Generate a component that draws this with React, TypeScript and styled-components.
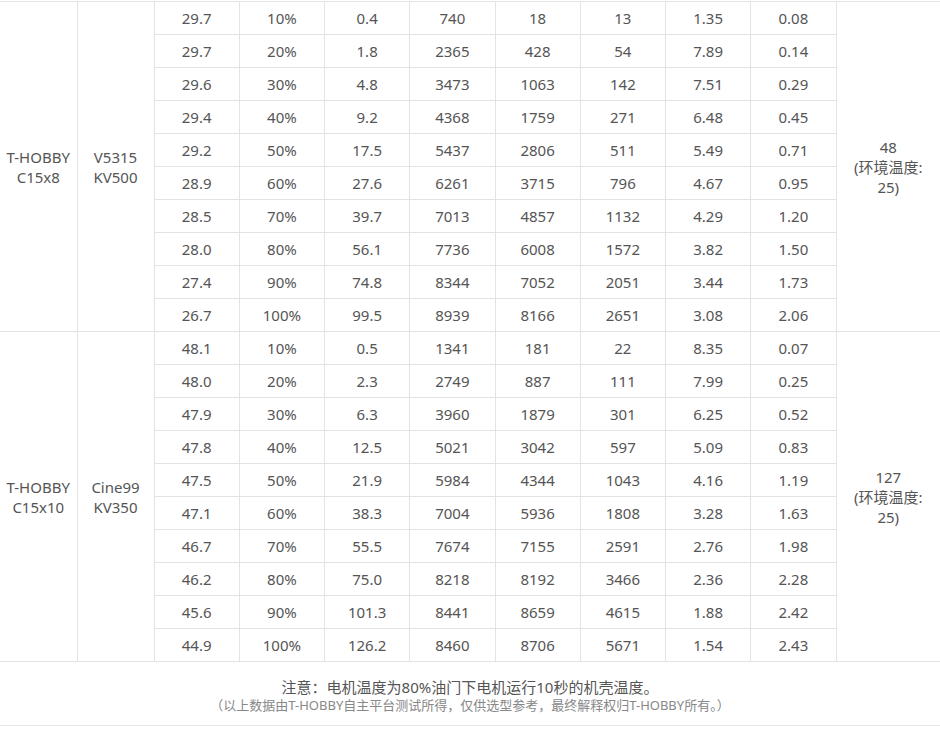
import React from 'react';
import styled, { createGlobalStyle } from 'styled-components';

const GlobalStyle = createGlobalStyle`
    html, body {
        margin: 0;
        padding: 0;
        background: #fff;
    }
    body {
        font-family: "Noto Sans", "Noto Sans CJK SC", sans-serif;
        color: #555;
    }
`

const StyledWrapper = styled.div`
    width: 940px;
    padding-top: 1px;
`

const StyledTable = styled.table`
    width: 940px;
    border-collapse: collapse;
    table-layout: fixed;
    font-size: 15px;
    color: #555;
`

const StyledCell = styled.td`
    height: 32px;
    padding: 0;
    border: 1px solid #e3e3e3;
    text-align: center;
    vertical-align: middle;
    line-height: 20px;
    &:first-child {
        border-left: none;
    }
    &:last-child {
        border-right: none;
    }
`

const StyledNote = styled.div`
    padding: 15px 0 11px;
    text-align: center;
    border-bottom: 1px solid #e6e6e6;
`

const StyledNoteMain = styled.div`
    font-size: 15px;
    line-height: 20px;
    color: #555;
`

const StyledNoteSub = styled.div`
    font-size: 13px;
    line-height: 17px;
    color: #888;
`

interface MotorGroup {
    motor: string[],
    prop: string[],
    temp: string[],
    rows: string[][],
}

const groups: MotorGroup[] = [
    {
        motor: ['T-HOBBY', 'C15x8'],
        prop: ['V5315', 'KV500'],
        temp: ['48', '(环境温度:', '25)'],
        rows: [
            ['29.7', '10%', '0.4', '740', '18', '13', '1.35', '0.08'],
            ['29.7', '20%', '1.8', '2365', '428', '54', '7.89', '0.14'],
            ['29.6', '30%', '4.8', '3473', '1063', '142', '7.51', '0.29'],
            ['29.4', '40%', '9.2', '4368', '1759', '271', '6.48', '0.45'],
            ['29.2', '50%', '17.5', '5437', '2806', '511', '5.49', '0.71'],
            ['28.9', '60%', '27.6', '6261', '3715', '796', '4.67', '0.95'],
            ['28.5', '70%', '39.7', '7013', '4857', '1132', '4.29', '1.20'],
            ['28.0', '80%', '56.1', '7736', '6008', '1572', '3.82', '1.50'],
            ['27.4', '90%', '74.8', '8344', '7052', '2051', '3.44', '1.73'],
            ['26.7', '100%', '99.5', '8939', '8166', '2651', '3.08', '2.06'],
        ],
    },
    {
        motor: ['T-HOBBY', 'C15x10'],
        prop: ['Cine99', 'KV350'],
        temp: ['127', '(环境温度:', '25)'],
        rows: [
            ['48.1', '10%', '0.5', '1341', '181', '22', '8.35', '0.07'],
            ['48.0', '20%', '2.3', '2749', '887', '111', '7.99', '0.25'],
            ['47.9', '30%', '6.3', '3960', '1879', '301', '6.25', '0.52'],
            ['47.8', '40%', '12.5', '5021', '3042', '597', '5.09', '0.83'],
            ['47.5', '50%', '21.9', '5984', '4344', '1043', '4.16', '1.19'],
            ['47.1', '60%', '38.3', '7004', '5936', '1808', '3.28', '1.63'],
            ['46.7', '70%', '55.5', '7674', '7155', '2591', '2.76', '1.98'],
            ['46.2', '80%', '75.0', '8218', '8192', '3466', '2.36', '2.28'],
            ['45.6', '90%', '101.3', '8441', '8659', '4615', '1.88', '2.42'],
            ['44.9', '100%', '126.2', '8460', '8706', '5671', '1.54', '2.43'],
        ],
    },
]

const renderLines = (lines: string[]) =>
    lines.map((line, i) => (
        <React.Fragment key={i}>
            {i > 0 && <br />}
            {line}
        </React.Fragment>
    ))

function App() {
    return (
        <StyledWrapper>
            <GlobalStyle />
            <StyledTable>
                <colgroup>
                    <col style={{ width: 77 }} />
                    <col style={{ width: 77 }} />
                    {Array.from({ length: 8 }).map((_, i) => <col key={i} style={{ width: 85.25 }} />)}
                    <col />
                </colgroup>
                <tbody>
                    {groups.map((group, g) =>
                        group.rows.map((row, r) => (
                            <tr key={`${g}-${r}`}>
                                {r === 0 && <StyledCell rowSpan={group.rows.length}>{renderLines(group.motor)}</StyledCell>}
                                {r === 0 && <StyledCell rowSpan={group.rows.length}>{renderLines(group.prop)}</StyledCell>}
                                {row.map((value, c) => <StyledCell key={c}>{value}</StyledCell>)}
                                {r === 0 && <StyledCell rowSpan={group.rows.length}>{renderLines(group.temp)}</StyledCell>}
                            </tr>
                        ))
                    )}
                </tbody>
            </StyledTable>
            <StyledNote>
                <StyledNoteMain>注意：电机温度为80%油门下电机运行10秒的机壳温度。</StyledNoteMain>
                <StyledNoteSub>（以上数据由T-HOBBY自主平台测试所得，仅供选型参考，最终解释权归T-HOBBY所有。）</StyledNoteSub>
            </StyledNote>
        </StyledWrapper>
    )
}

export default App;
